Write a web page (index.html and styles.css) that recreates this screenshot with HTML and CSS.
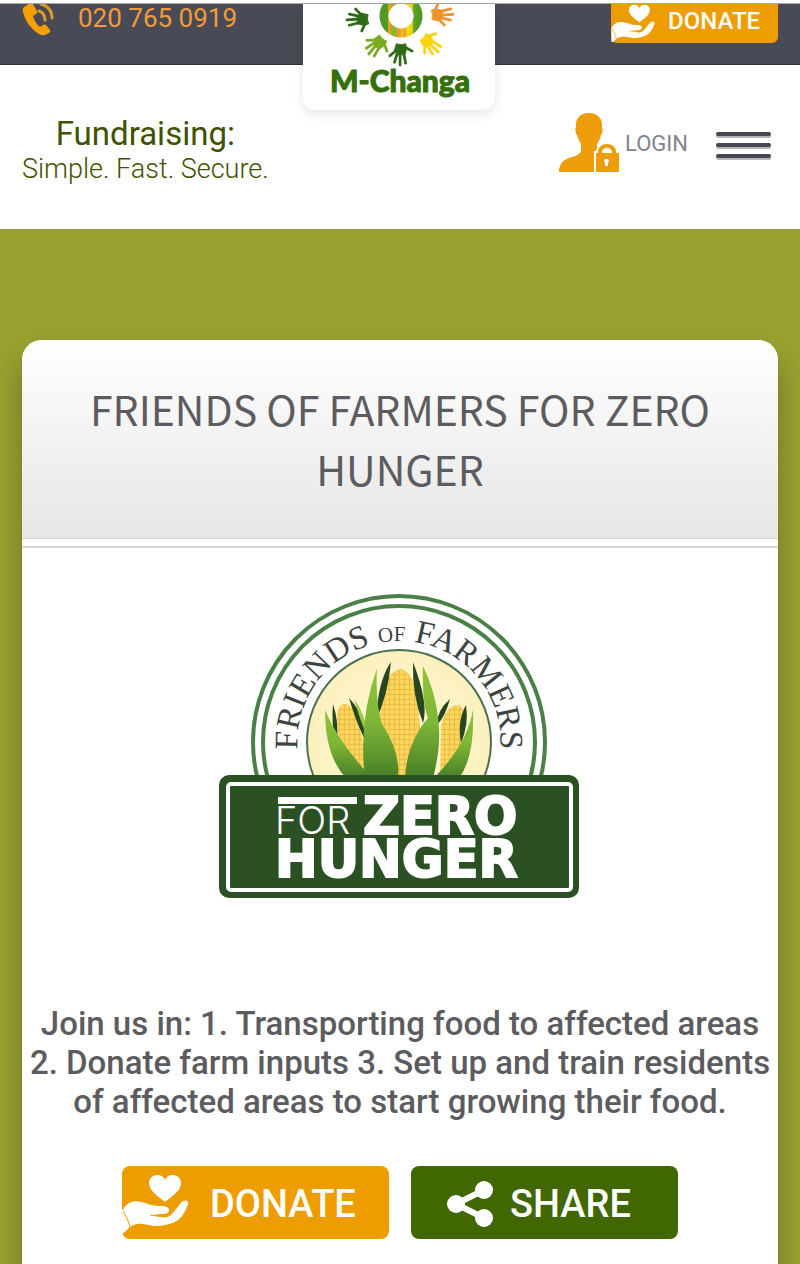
FILE: index.html
```html
<!DOCTYPE html>
<html lang="en">
<head>
    <meta charset="UTF-8">
    <meta name="viewport" content="width=device-width, initial-scale=1.0">
    <title>M-Changa - Friends of Farmers for Zero Hunger</title>
    <link rel="stylesheet" href="styles.css">
</head>
<body>
    <!-- shared shapes -->
    <svg class="defs" width="0" height="0" aria-hidden="true">
        <symbol id="give" viewBox="0 0 68 60">
            <path fill="#fff" d="M43 28C36 22 27 17 27 9c0-5 4-8 8-8s7 2 8 5c1-3 4-5 8-5s8 3 8 8c0 8-9 13-16 19z"/>
            <path fill="#fff" d="M0 37C5 28 12 26 19 28c7 1 10 4 18 4 5 0 10 0 10 4 0 3-3 4-7 4l-10 1 12 2c8-1 11-7 16-13 4-5 9-4 8 0-2 6-5 12-10 16-6 4-15 6-23 6-9-1-14-4-21-1-4 1-6 4-8 6L0 60z"/>
            <path fill="none" stroke="#ee9d00" d="M1 37c3 5 6 10 7 17M28 41l14 2c4 0 7-2 8-4"/>
        </symbol>
        <symbol id="hand" viewBox="-14 -15 28 30" overflow="visible">
            <path d="M-5-10Q0-8 5-10L6-4 4 2-4 2-7-3z"/>
            <path fill="none" stroke-width="3" stroke-linecap="round" d="M-5-3L-12 3M-4 0L-7 10M-1 0V13M3 0L5 11M5-6L12-2"/>
        </symbol>
    </svg>

    <div class="topbar">
        <a class="phone" href="tel:0207650919">
            <svg width="34" height="34" viewBox="0 0 34 34" aria-hidden="true">
                <path fill="#f5a000" d="M2 3L8-1q2-1 3 1l4 7q1 2-1 3l-3 2q2 7 7 11l3-2q2-1 3 0l4 5q1 2-1 3l-4 2q-3 1-6-1C9 25 3 17 1 8Q0 5 2 3z"/>
                <path fill="none" stroke="#dd9a2d" stroke-width="3" stroke-linecap="round" d="M17 7q6 2 6 9M19 0q11 3 11 14"/>
            </svg>
            020 765 0919
        </a>
        <a class="logo" href="#">
            <svg width="192" height="106" viewBox="303 4 192 106" role="img" aria-label="M-Changa">
                <defs>
                    <linearGradient id="stripes">
                        <stop offset="0" stop-color="#4f9a22"/><stop offset=".12" stop-color="#4f9a22"/>
                        <stop offset=".12" stop-color="#e8a126"/><stop offset=".2" stop-color="#e8a126"/>
                        <stop offset=".2" stop-color="#8db82a"/><stop offset=".38" stop-color="#8db82a"/>
                        <stop offset=".38" stop-color="#f29a2e"/><stop offset=".5" stop-color="#f29a2e"/>
                        <stop offset=".5" stop-color="#dfd91c"/><stop offset=".6" stop-color="#f29a2e"/>
                        <stop offset=".7" stop-color="#f5dd10"/><stop offset=".86" stop-color="#dccf12"/>
                        <stop offset=".86" stop-color="#6ba52a"/><stop offset="1" stop-color="#4f9a22"/>
                    </linearGradient>
                </defs>
                <circle cx="401" cy="16" r="17" fill="none" stroke="url(#stripes)" stroke-width="9"/>
                <g transform="translate(401 17)">
                    <g class="hand-dark" transform="rotate(86) translate(0 42)"><use href="#hand" x="-13" y="-14" width="26" height="28"/></g>
                    <g class="hand-lime" transform="rotate(40) translate(0 37)"><use href="#hand" x="-13" y="-14" width="26" height="28"/></g>
                    <g class="hand-dark" transform="translate(0 36)"><use href="#hand" x="-13" y="-14" width="26" height="28"/></g>
                    <g class="hand-yellow" transform="rotate(-48) translate(0 39)"><use href="#hand" x="-13" y="-14" width="26" height="28"/></g>
                    <g class="hand-orange" transform="rotate(-94) translate(0 40)"><use href="#hand" x="-13" y="-14" width="26" height="28"/></g>
                    <g class="hand-orange" transform="rotate(133) translate(0 38)"><use href="#hand" x="-13" y="-14" width="26" height="28"/></g>
                </g>
                <text class="logo-name" x="400" y="92">M-Changa</text>
            </svg>
        </a>
        <button type="button" class="btn-top">
            <svg width="45" height="38" viewBox="0 0 68 58" aria-hidden="true"><use href="#give" width="68" height="60"/></svg>
            DONATE
        </button>
    </div>

    <header class="header">
        <p class="tagline"><strong>Fundraising:</strong>Simple. Fast. Secure.</p>
        <a class="login" href="#">
            <svg width="60" height="60" viewBox="0 0 60 60" aria-hidden="true">
                <path fill="#ee9d0a" d="M30 0c9 0 14 6 13 15 1 1 1 5-1 7-1 5-3 7-4 9v8l-1 20H0c0-8 4-12 10-14 7-2 12-4 12-8v-6c-2-3-3-6-4-9-2-2-2-6-1-8C16 6 21 0 30 0z"/>
                <path stroke="#fff" stroke-width="2" fill="#ee9d0a" d="M36 39h2c0-12 20-12 20 0h3v21H36z"/>
                <path fill="#fff" d="M43 40c0-7 10-7 10 0zM46 46h3l1 2-1 2v3h-3v-3l-1-2z"/>
            </svg>
            LOGIN
        </a>
        <button type="button" class="menu" aria-label="Menu"><span></span><span></span><span></span></button>
    </header>

    <main class="content">
        <section class="card">
            <h1>FRIENDS OF FARMERS FOR ZERO HUNGER</h1>
            <div class="card-body">
                <svg class="emblem" width="440" height="376" viewBox="180 560 440 376" role="img" aria-label="Friends of Farmers for Zero Hunger">
                    <defs>
                        <pattern id="kernels" width="5" height="5" patternUnits="userSpaceOnUse">
                            <rect width="5" height="5" fill="#f0bd3c"/>
                            <rect width="4" height="4" rx="1" fill="#f9d765"/>
                        </pattern>
                        <linearGradient id="leaf" x1="0" y1="0" x2="0" y2="1">
                            <stop offset="0" stop-color="#8fc33a"/><stop offset=".5" stop-color="#7fb636"/><stop offset="1" stop-color="#477f27"/>
                        </linearGradient>
                        <radialGradient id="glow">
                            <stop offset="0" stop-color="#fffbe0"/><stop offset="1" stop-color="#fcf0bd"/>
                        </radialGradient>
                        <path id="arc" d="M298 752A101 101 0 0 1 399 641A101 101 0 0 1 500 752"/>
                    </defs>
                    <circle cx="399" cy="742" r="146" fill="#fff" stroke="#4a7f45" stroke-width="4"/>
                    <circle cx="399" cy="742" r="136" fill="#fff" stroke="#4a7f45" stroke-width="4"/>
                    <circle cx="399" cy="742" r="92" fill="url(#glow)" stroke="#4a7050" stroke-width="2"/>
                    <text class="emblem-arc"><textPath href="#arc" startOffset="50%">FRIENDS <tspan class="small">OF</tspan> FARMERS</textPath></text>

                    <path fill="url(#kernels)" d="M337 720Q337 705 344 704Q352 704 357 717L372 778H344z"/>
                    <path fill="url(#kernels)" d="M440 778L441 726Q446 706 457 705Q465 705 464 720L456 778z"/>
                    <path fill="url(#kernels)" d="M377 778L380 702Q386 672 400 669Q414 671 418 702L424 778z"/>
                    <path fill="#27461f" d="M333 704Q331 729 337 741Q339 722 333 704zM349 698Q359 709 366 724L364 738Q355 719 349 698zM391 662Q378 680 376 720Q388 695 391 662zM413 662Q412 696 423 723Q429 704 413 662zM450 699Q437 710 437 725Q445 717 450 699zM466 705Q457 721 461 743Q469 724 466 705z"/>
                    <path fill="url(#leaf)" d="M325 710Q325 756 346 778H372Q338 742 325 710zM473 709Q468 743 434 778H459Q475 757 473 709z"/>
                    <path fill="#9ccc43" d="M354 699Q366 714 367 736Q360 720 354 699z"/>
                    <path fill="url(#leaf)" d="M377 668Q358 721 365 778H398Q401 753 382 724Q375 701 377 668zM423 666Q422 704 428 718Q407 742 405 778H433Q442 744 438 717Q435 691 423 666z"/>

                    <rect x="219" y="775" width="360" height="123" rx="10" fill="#2b5024"/>
                    <rect x="228" y="784" width="343" height="106" rx="3" fill="none" stroke="#fff" stroke-width="4"/>
                    <rect x="278" y="797" width="79" height="7" fill="#fff"/>
                    <text class="emblem-for" x="275" y="834">FOR</text>
                    <text class="emblem-zero" x="363" y="834">ZERO</text>
                    <text class="emblem-zero" x="275" y="877">HUNGER</text>
                </svg>
                <p class="summary">Join us in: 1. Transporting food to affected areas 2. Donate farm inputs 3. Set up and train residents of affected areas to start growing their food.</p>
                <div class="actions">
                    <button type="button" class="btn btn-donate">
                        <svg width="68" height="60" aria-hidden="true"><use href="#give"/></svg>
                        DONATE
                    </button>
                    <button type="button" class="btn btn-share">
                        <svg width="46" height="46" viewBox="0 0 46 46" aria-hidden="true">
                            <path fill="none" stroke="#fff" stroke-width="6" d="M37 9L9 23 37 37"/>
                            <circle cx="9" cy="23" r="9" fill="#fff"/><circle cx="37" cy="9" r="9" fill="#fff"/><circle cx="37" cy="37" r="9" fill="#fff"/>
                        </svg>
                        SHARE
                    </button>
                </div>
            </div>
        </section>
    </main>
</body>
</html>
```
FILE: styles.css
```css
* {
    box-sizing: border-box;
}

body {
    margin: 0;
    min-height: 100vh;
    display: flex;
    flex-direction: column;
    font-family: Roboto, sans-serif;
    background: #fff;
    color: #5c5c60;
}

h1, p {
    margin: 0;
}

a {
    text-decoration: none;
}

button {
    border: none;
    padding: 0;
    font-family: inherit;
    cursor: pointer;
}

svg {
    display: block;
    flex: none;
}

.defs {
    position: absolute;
}

/* top bar */
.topbar {
    position: relative;
    display: flex;
    justify-content: space-between;
    align-items: flex-start;
    height: 62px;
    margin-top: 3px;
    padding: 0 22px;
    background: #484a56;
    border-top: 1px solid #a5a5aa;
    border-bottom: 1px solid #30323d;
}

.phone {
    display: flex;
    gap: 22px;
    font-size: 26px;
    line-height: 28px;
    color: #f59b3a;
}

.logo {
    position: absolute;
    top: 0;
    left: 50%;
    margin-left: -97px;
    background: #fff;
    border-radius: 0 0 12px 12px;
    box-shadow: 0 4px 12px rgba(0, 0, 0, 0.1);
}

.logo-name {
    font-family: Lato, sans-serif;
    font-size: 30px;
    font-weight: 900;
    text-anchor: middle;
    fill: #36700d;
    stroke: #36700d;
    stroke-width: 1;
    stroke-linejoin: round;
}

.hand-dark { fill: #2f6b16; stroke: #2f6b16; }
.hand-lime { fill: #7aab22; stroke: #7aab22; }
.hand-yellow { fill: #fbd40b; stroke: #fbd40b; }
.hand-orange { fill: #f1932f; stroke: #f1932f; }

.btn-top {
    display: flex;
    gap: 12px;
    width: 167px;
    height: 39px;
    font-size: 24px;
    font-weight: 500;
    line-height: 34px;
    color: #fff;
    background: #ee9d00;
    border-radius: 0 0 6px 6px;
}

/* header */
.header {
    display: flex;
    align-items: center;
    height: 164px;
    padding: 0 29px 4px 22px;
}

.tagline {
    margin-top: 10px;
    font-size: 27px;
    font-weight: 300;
    line-height: 32px;
    text-align: center;
    color: #3f5200;
}

.tagline strong {
    display: block;
    font-size: 33px;
    font-weight: 400;
    line-height: 38px;
}

.login {
    display: flex;
    align-items: center;
    gap: 6px;
    margin-left: auto;
    padding-bottom: 4px;
    font-size: 22px;
    color: #83838e;
}

.menu {
    display: flex;
    flex-direction: column;
    gap: 7px;
    width: 55px;
    margin-left: 28px;
    background: none;
}

.menu span {
    height: 4px;
    background: #454753;
    border-radius: 2px;
    box-shadow: 0 2px 0 #b5b5ba;
}

/* campaign card */
.content {
    flex: 1;
    display: flex;
    padding-top: 111px;
    background: #99a130;
}

.card {
    flex: 1;
    margin: 0 22px;
    background: #fff;
    border-radius: 20px 20px 0 0;
    box-shadow: 0 20px 30px rgba(40, 50, 20, 0.4);
}

.card h1 {
    height: 199px;
    padding: 38px 60px 0;
    font-family: "Noto Sans CJK SC", sans-serif;
    font-size: 41px;
    font-weight: 400;
    line-height: 60px;
    text-align: center;
    background: linear-gradient(#fff, #e6e6e6);
    border-bottom: 1px solid #d2d2d2;
    border-radius: 20px 20px 0 0;
}

.card-body {
    margin-top: 7px;
    padding-top: 12px;
    border-top: 2px solid #d5d5d5;
}

.emblem {
    margin: 0 auto;
    max-width: 100%;
}

.emblem-arc {
    font-family: "Liberation Serif", serif;
    font-size: 33px;
    text-anchor: middle;
    fill: #3c4540;
}

.emblem-arc .small {
    font-size: 21px;
}

.emblem-for {
    font-family: Inter, sans-serif;
    font-size: 38px;
    font-weight: 300;
    fill: #fff;
}

.emblem-zero {
    font-family: "DejaVu Sans", sans-serif;
    font-size: 51px;
    font-weight: 700;
    fill: #fff;
    stroke: #fff;
    stroke-width: 2;
}

.summary {
    margin-top: 68px;
    padding: 0 3px;
    font-size: 33px;
    font-weight: 500;
    line-height: 39px;
    text-align: center;
}

.actions {
    display: flex;
    justify-content: center;
    gap: 22px;
    padding: 45px 0 25px;
}

.btn {
    display: flex;
    align-items: center;
    width: 267px;
    height: 73px;
    padding-top: 2px;
    font-size: 38px;
    font-weight: 500;
    color: #fff;
    border-radius: 8px;
}

.btn-donate {
    gap: 20px;
    background: #ee9d00;
}

.btn-share {
    gap: 17px;
    padding-left: 36px;
    background: #416800;
}
```
